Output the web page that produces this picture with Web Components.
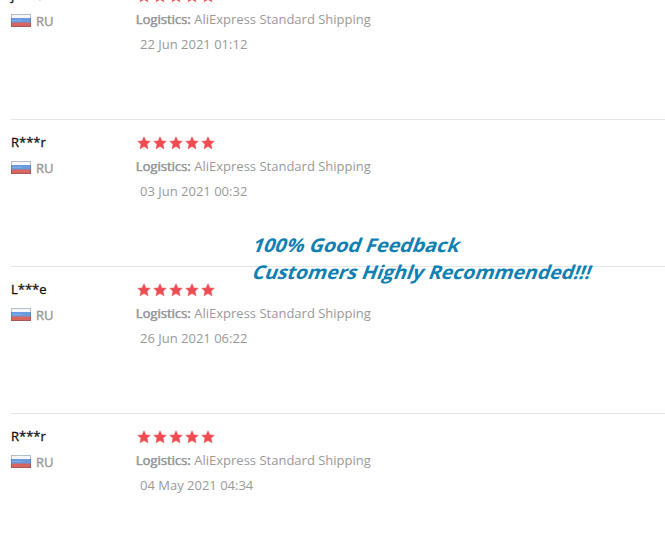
<!DOCTYPE html>
<html lang="en"><head><meta charset="utf-8"><title>Feedback</title>
<style>html,body{margin:0;background:#fff}body{height:547px;overflow:hidden}</style></head>
<body>
<feedback-list>
<feedback-row name="j***e" date="22 Jun 2021 01:12"></feedback-row>
<feedback-row name="R***r" date="03 Jun 2021 00:32"></feedback-row>
<feedback-row name="L***e" date="26 Jun 2021 06:22"></feedback-row>
<feedback-row name="R***r" date="04 May 2021 04:34"></feedback-row>
<promo-caption slot="overlay"></promo-caption>
</feedback-list>
<script>
class CountryFlag extends HTMLElement{
 constructor(){super();this.attachShadow({mode:'open'}).innerHTML=`
<style>:host{display:block;width:20px;height:13px}svg{display:block}</style>
<svg width="20" height="13" viewBox="0 0 20 13"><path fill="#f7f6f7" d="M0 0h20v5H0z"/><path fill="#6b9bdf" d="M0 4h20v5H0z"/><path fill="#d9655f" d="M0 8.5h20V13H0z"/><path stroke="#8db2e8" stroke-dasharray="2 1" d="M1 6.5h10"/><path stroke="#b5bdc9" d="M0 .5h20M.5 0v4M19.5 0v4"/><path stroke="#5b83c4" d="M.5 4v5M19.5 4v5"/><path stroke="#a8585b" d="M0 12.5h20M.5 9v4M19.5 9v4"/></svg>`}
}
customElements.define('country-flag',CountryFlag);
class StarRating extends HTMLElement{
 constructor(){super();this.attachShadow({mode:'open'}).innerHTML=`
<style>:host{display:flex;gap:2px;height:14px}svg{display:block}</style>`+
'<svg width="14" height="14" viewBox="0 0 14 14"><path fill="#ef4c52" stroke="#ef4c52" stroke-width=".5" stroke-linejoin="round" d="M7 .8 8.9 4.9 13.3 5.3 10 8.3l1 4.5L7 10.5l-4 2.3L4 8.3.7 5.3 5.1 4.9z"/></svg>'.repeat(5)}
}
customElements.define('star-rating',StarRating);
class FeedbackRow extends HTMLElement{
 constructor(){super();this.attachShadow({mode:'open'})}
 connectedCallback(){this.shadowRoot.innerHTML=`
<style>
:host{display:grid;grid-template-columns:125px 1fr;box-sizing:border-box;height:147px;border-top:1px solid #e6e6e6;font:13px/20px "Open Sans","Noto Sans",sans-serif;color:#999}
.user{padding-top:12px}.name{color:#111;-webkit-text-stroke:.3px #111}
.country{display:flex;gap:5px;margin-top:6px;align-items:flex-start;-webkit-text-stroke:.4px #999}
country-flag{margin-top:3px}
.detail{padding-top:16px}star-rating{margin-left:1px}
.ship{margin-top:6px;white-space:nowrap}b{font-weight:400;-webkit-text-stroke:.25px #999;text-shadow:-.4px 0 #999}
.date{margin:5px 0 0 4px}
</style>
<div class="user"><div class="name">${this.getAttribute('name')}</div><div class="country"><country-flag></country-flag><span>RU</span></div></div>
<div class="detail"><star-rating></star-rating><div class="ship"><b>Logistics:</b> AliExpress Standard Shipping</div><div class="date">${this.getAttribute('date')}</div></div>`}
}
customElements.define('feedback-row',FeedbackRow);
class PromoCaption extends HTMLElement{
 constructor(){super();this.attachShadow({mode:'open'}).innerHTML=`
<style>:host{display:block;position:absolute;left:250px;top:230px}svg{display:block}text{font:700 19px "Open Sans","Noto Sans",sans-serif;fill:#107fb2}</style>
<svg width="350" height="60"><text transform="translate(1 22) skewX(-20)" textLength="207" lengthAdjust="spacingAndGlyphs">100% Good Feedback</text><text transform="translate(1 49) skewX(-20)" textLength="338" lengthAdjust="spacingAndGlyphs">Customers Highly Recommended!!!</text></svg>`}
}
customElements.define('promo-caption',PromoCaption);
class FeedbackList extends HTMLElement{
 constructor(){super();this.attachShadow({mode:'open'}).innerHTML=`
<style>:host{display:block;position:relative;height:547px;overflow:hidden}.rows{margin-top:-28px;padding-left:11px}</style>
<div class="rows"><slot></slot></div><slot name="overlay"></slot>`}
}
customElements.define('feedback-list',FeedbackList);
</script></body></html>
